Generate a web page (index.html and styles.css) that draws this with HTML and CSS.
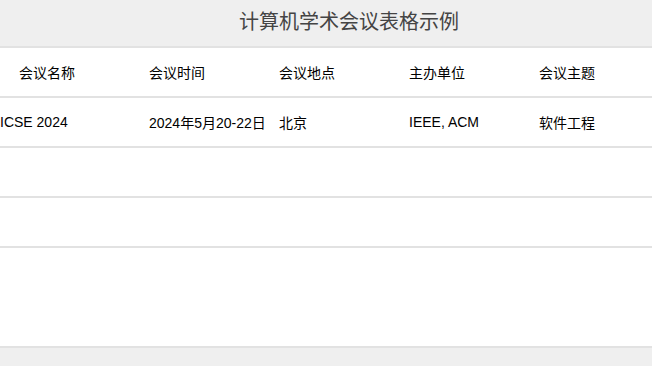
FILE: index.html
```html
<!DOCTYPE html>
<html lang="zh-CN">
<head>
    <meta charset="UTF-8">
    <meta name="viewport" content="width=device-width, initial-scale=1.0">
    <title>计算机学术会议表格示例</title>
    <link rel="stylesheet" href="styles.css">
</head>
<body>
    <h1 class="page-title">计算机学术会议表格示例</h1>

    <table class="conf-table">
        <colgroup>
            <col class="fixed-col"><col class="fixed-col"><col class="fixed-col"><col class="fixed-col"><col>
        </colgroup>
        <thead>
            <tr>
                <th>会议名称</th>
                <th>会议时间</th>
                <th>会议地点</th>
                <th>主办单位</th>
                <th>会议主题</th>
            </tr>
        </thead>
        <tbody>
            <tr>
                <td class="name-cell">ICSE 2024</td>
                <td>2024年5月20-22日</td>
                <td>北京</td>
                <td>IEEE, ACM</td>
                <td>软件工程</td>
            </tr>
            <tr><td></td><td></td><td></td><td></td><td></td></tr>
            <tr><td></td><td></td><td></td><td></td><td></td></tr>
            <tr class="tall-row"><td></td><td></td><td></td><td></td><td></td></tr>
        </tbody>
    </table>
</body>
</html>
```

FILE: styles.css
```css
body {
    margin: 0;
    background-color: #efefef;
    font-family: "Liberation Sans", "Noto Sans CJK SC", sans-serif;
    color: #000;
}
.page-title {
    margin: 0;
    height: 46px;
    line-height: 44px;
    padding-left: 46px;
    text-align: center;
    font-size: 20px;
    font-weight: normal;
    color: #444;
}
.conf-table {
    width: 100%;
    table-layout: fixed;
    border-collapse: collapse;
    background-color: white;
    border-top: 2px solid #e2e2e2;
}
.conf-table col.fixed-col {
    width: 130px;
}
.conf-table tr {
    height: 50px;
    border-bottom: 2px solid #e2e2e2;
}
.conf-table th,
.conf-table td {
    padding: 0 0 0 19px;
    text-align: left;
    font-size: 14px;
    font-weight: normal;
    white-space: nowrap;
    overflow: visible;
}
.conf-table td.name-cell {
    padding-left: 0;
}
.conf-table tr.tall-row {
    height: 100px;
}
```
